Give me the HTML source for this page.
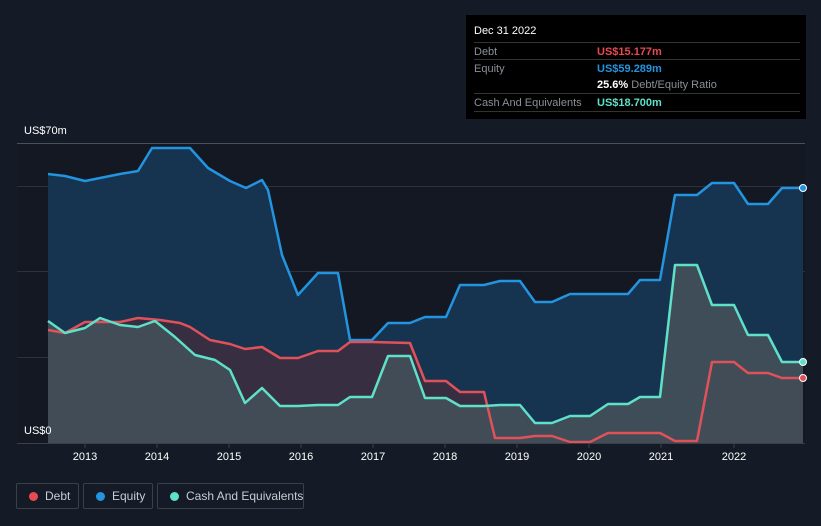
<!DOCTYPE html><html><head><style>
body{margin:0;width:821px;height:526px;background:#151b26;font-family:"Liberation Sans",sans-serif;overflow:hidden;position:relative}
.t{position:absolute;color:#fff;font-size:11px}
.tip{position:absolute;left:466px;top:15px;width:340px;height:104px;background:#000;font-size:11px}
.row{position:absolute;left:8px;width:326px;border-top:1px solid #333;height:17px}
.lab{position:absolute;left:0;top:3px;color:#8a8f97}
.val{position:absolute;left:123px;top:3px;font-weight:bold}
.leg{position:absolute;top:483px;height:26px;border:1px solid #3a404a;border-radius:2px;color:#c8ccd2;font-size:12px;box-sizing:border-box;white-space:nowrap}
.leg i{position:absolute;left:12px;top:8px;width:9px;height:9px;border-radius:50%}
.leg span{position:absolute;left:28px;top:5px}
</style></head><body>
<svg width="821" height="526" style="position:absolute;left:0;top:0">
<rect x="17" y="143" width="788" height="300" fill="#131822"/>
<g stroke="#2c323c" stroke-width="1"><line x1="17" y1="143.5" x2="805" y2="143.5" stroke="#4a5058"/><line x1="17" y1="186.5" x2="805" y2="186.5"/><line x1="17" y1="271.5" x2="805" y2="271.5"/><line x1="17" y1="357.5" x2="805" y2="357.5"/></g>
<polygon fill="#163350" points="48,443 48,174 65,176 85,181 100,178 120,174 138,171 152,148 190,148 208,168 230,181 246,188 262,180 268,190 282,255 298,295 318,273 338,273 350,340 372,340 388,323 410,323 425,317 446,317 460,285 484,285 500,281 520,281 535,302 552,302 570,294 590,294 628,294 640,280 660,280 675,195 697,195 712,183 734,183 748,204 768,204 782,188 803,188 803,443"/>
<polygon fill="#3b2d40" opacity="0.9" points="48,443 48,330 65,333 85,322 120,322 138,318 160,320 180,323 190,327 210,340 230,344 245,349 262,347 280,358 298,358 318,351 338,351 350,342 372,342 410,343 425,381 446,381 460,392 484,392 495,438 520,438 535,436 552,436 570,442 590,442 608,433 660,433 675,441 697,441 712,362 734,362 748,373 768,373 782,378 803,378 803,443"/>
<polygon fill="#425059" opacity="0.9" points="48,443 48,321 65,333 85,328 100,318 120,325 138,327 155,321 175,337 195,355 215,360 230,370 245,403 262,388 280,406 298,406 318,405 338,405 350,397 372,397 388,356 410,356 425,398 446,398 460,406 484,406 500,405 520,405 535,423 552,423 570,416 590,416 608,404 628,404 640,397 660,397 675,265 697,265 712,305 734,305 748,335 768,335 782,362 803,362 803,443"/>
<g fill="none" stroke-width="2.5" stroke-linejoin="round">
<polyline stroke="#2394df" points="48,174 65,176 85,181 100,178 120,174 138,171 152,148 190,148 208,168 230,181 246,188 262,180 268,190 282,255 298,295 318,273 338,273 350,340 372,340 388,323 410,323 425,317 446,317 460,285 484,285 500,281 520,281 535,302 552,302 570,294 590,294 628,294 640,280 660,280 675,195 697,195 712,183 734,183 748,204 768,204 782,188 803,188"/>
<polyline stroke="#e0525a" points="48,330 65,333 85,322 120,322 138,318 160,320 180,323 190,327 210,340 230,344 245,349 262,347 280,358 298,358 318,351 338,351 350,342 372,342 410,343 425,381 446,381 460,392 484,392 495,438 520,438 535,436 552,436 570,442 590,442 608,433 660,433 675,441 697,441 712,362 734,362 748,373 768,373 782,378 803,378"/>
<polyline stroke="#5fe0c8" points="48,321 65,333 85,328 100,318 120,325 138,327 155,321 175,337 195,355 215,360 230,370 245,403 262,388 280,406 298,406 318,405 338,405 350,397 372,397 388,356 410,356 425,398 446,398 460,406 484,406 500,405 520,405 535,423 552,423 570,416 590,416 608,404 628,404 640,397 660,397 675,265 697,265 712,305 734,305 748,335 768,335 782,362 803,362"/>
</g>
<circle cx="803" cy="188" r="3.5" fill="#2394df" stroke="#fff" stroke-width="1"/>
<circle cx="803" cy="378" r="3.5" fill="#e0525a" stroke="#fff" stroke-width="1"/>
<circle cx="803" cy="362" r="3.5" fill="#5fe0c8" stroke="#fff" stroke-width="1"/>
<line x1="17" y1="443.5" x2="805" y2="443.5" stroke="#3a404a"/>
<g stroke="#3a404a"><line x1="85" y1="443" x2="85" y2="448"/><line x1="157" y1="443" x2="157" y2="448"/><line x1="229" y1="443" x2="229" y2="448"/><line x1="301" y1="443" x2="301" y2="448"/><line x1="373" y1="443" x2="373" y2="448"/><line x1="445" y1="443" x2="445" y2="448"/><line x1="517" y1="443" x2="517" y2="448"/><line x1="589" y1="443" x2="589" y2="448"/><line x1="661" y1="443" x2="661" y2="448"/><line x1="734" y1="443" x2="734" y2="448"/></g>
<g fill="#fff" font-size="11" text-anchor="middle" font-family="Liberation Sans"><text x="85" y="460">2013</text><text x="157" y="460">2014</text><text x="229" y="460">2015</text><text x="301" y="460">2016</text><text x="373" y="460">2017</text><text x="445" y="460">2018</text><text x="517" y="460">2019</text><text x="589" y="460">2020</text><text x="661" y="460">2021</text><text x="734" y="460">2022</text></g>
</svg>
<div class="t" style="left:24px;top:125px">US$70m</div>
<div class="t" style="left:24px;top:425px">US$0</div>
<div class="tip">
<div style="position:absolute;left:8px;top:10px;color:#fff">Dec 31 2022</div>
<div class="row" style="top:27px"><span class="lab">Debt</span><span class="val" style="color:#e84a4f">US$15.177m</span></div>
<div class="row" style="top:44px"><span class="lab">Equity</span><span class="val" style="color:#2394df">US$59.289m</span></div>
<div style="position:absolute;left:131px;top:64px;color:#8a8f97"><b style="color:#fff">25.6%</b> Debt/Equity Ratio</div>
<div class="row" style="top:78px"><span class="lab">Cash And Equivalents</span><span class="val" style="color:#5fe0c8">US$18.700m</span></div>
<div class="row" style="top:96px;height:0"></div>
</div>
<div class="leg" style="left:16px;width:63px"><i style="background:#e84a4f"></i><span>Debt</span></div>
<div class="leg" style="left:83px;width:70px"><i style="background:#2394df"></i><span>Equity</span></div>
<div class="leg" style="left:157px;width:147px"><i style="background:#5fe0c8"></i><span>Cash And Equivalents</span></div>
</body></html>
